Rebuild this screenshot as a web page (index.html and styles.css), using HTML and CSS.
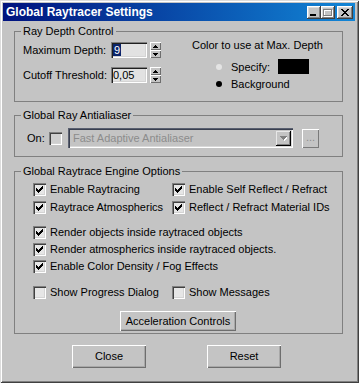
FILE: index.html
```html
<!DOCTYPE html>
<html>
<head>
<meta charset="utf-8">
<link rel="stylesheet" href="styles.css">
</head>
<body>
<div class="window">
  <div class="titlebar">
    <span class="title">Global Raytracer Settings</span>
    <div class="tbtns">
      <span class="tbtn tmin"><svg width="6" height="2" viewBox="0 0 6 2"><rect width="6" height="2" fill="#000"/></svg></span>
      <span class="tbtn tmax"><svg width="10" height="9" viewBox="0 0 10 9" shape-rendering="crispEdges"><path d="M1.5 2.5h8v6h-8z" fill="none" stroke="#fff"/><path d="M0.5 1.5h8v6h-8z" fill="none" stroke="#808080"/><rect x="0" y="1" width="9" height="1" fill="#808080"/></svg></span>
      <span class="tbtn tclose"><svg width="8" height="7" viewBox="0 0 8 7" shape-rendering="crispEdges"><path d="M0 0h2v1H0zM1 1h2v1H1zM2 2h4v1H2zM3 3h2v1H3zM2 4h4v1H2zM1 5h2v1H1zM0 6h2v1H0zM6 0h2v1H6zM5 1h2v1H5zM5 5h2v1H5zM6 6h2v1H6z" fill="#000"/></svg></span>
    </div>
  </div>
  <div class="client">
    <fieldset class="group g1">
      <legend>Ray Depth Control</legend>
      <div class="g1-body">
        <div class="depth">
          <div class="frow">
            <label>Maximum Depth:</label>
            <div class="input"><span class="sel">9</span></div>
            <div class="spin">
              <span class="sbtn"><svg width="5" height="3" viewBox="0 0 5 3" shape-rendering="crispEdges"><path d="M2 0h1v1H2zM1 1h3v1H1zM0 2h5v1H0z" fill="#000"/></svg></span>
              <span class="sbtn"><svg width="5" height="3" viewBox="0 0 5 3" shape-rendering="crispEdges"><path d="M0 0h5v1H0zM1 1h3v1H1zM2 2h1v1H2z" fill="#000"/></svg></span>
            </div>
          </div>
          <div class="frow">
            <label>Cutoff Threshold:</label>
            <div class="input">0,05</div>
            <div class="spin">
              <span class="sbtn"><svg width="5" height="3" viewBox="0 0 5 3" shape-rendering="crispEdges"><path d="M2 0h1v1H2zM1 1h3v1H1zM0 2h5v1H0z" fill="#000"/></svg></span>
              <span class="sbtn"><svg width="5" height="3" viewBox="0 0 5 3" shape-rendering="crispEdges"><path d="M0 0h5v1H0zM1 1h3v1H1zM2 2h1v1H2z" fill="#000"/></svg></span>
            </div>
          </div>
        </div>
        <div class="colorcol">
          <div class="ctitle">Color to use at Max. Depth</div>
          <div class="radio r1"><span class="dot off"></span>Specify:<span class="swatch"></span></div>
          <div class="radio r2"><span class="dot on"></span>Background</div>
        </div>
      </div>
    </fieldset>

    <fieldset class="group g2">
      <legend>Global Ray Antialiaser</legend>
      <div class="g2-row">
        <span class="onlbl">On:</span>
        <span class="cb cb-dis"></span>
        <div class="dropdown">
          <span class="ddtext">Fast Adaptive Antialiaser</span>
          <span class="ddbtn"><svg width="7" height="5" viewBox="0 0 7 5" shape-rendering="crispEdges"><path d="M1 1h7v1H1zM2 2h5v1H2zM3 3h3v1H3zM4 4h1v1H4z" fill="#fff"/><path d="M0 0h7v1H0zM1 1h5v1H1zM2 2h3v1H2zM3 3h1v1H3z" fill="#808080"/></svg></span>
        </div>
        <span class="dotsbtn">...</span>
      </div>
    </fieldset>

    <fieldset class="group g3">
      <legend>Global Raytrace Engine Options</legend>
      <div class="grid2">
        <div class="chk"><span class="cb"><svg width="13" height="13" viewBox="0 0 13 13" shape-rendering="crispEdges"><path d="M3 5h1v3H3zM4 6h1v3H4zM5 7h1v3H5zM6 6h1v3H6zM7 5h1v3H7zM8 4h1v3H8zM9 3h1v3H9z" fill="#000"/></svg></span>Enable Raytracing</div>
        <div class="chk"><span class="cb"><svg width="13" height="13" viewBox="0 0 13 13" shape-rendering="crispEdges"><path d="M3 5h1v3H3zM4 6h1v3H4zM5 7h1v3H5zM6 6h1v3H6zM7 5h1v3H7zM8 4h1v3H8zM9 3h1v3H9z" fill="#000"/></svg></span>Enable Self Reflect / Refract</div>
        <div class="chk"><span class="cb"><svg width="13" height="13" viewBox="0 0 13 13" shape-rendering="crispEdges"><path d="M3 5h1v3H3zM4 6h1v3H4zM5 7h1v3H5zM6 6h1v3H6zM7 5h1v3H7zM8 4h1v3H8zM9 3h1v3H9z" fill="#000"/></svg></span>Raytrace Atmospherics</div>
        <div class="chk"><span class="cb"><svg width="13" height="13" viewBox="0 0 13 13" shape-rendering="crispEdges"><path d="M3 5h1v3H3zM4 6h1v3H4zM5 7h1v3H5zM6 6h1v3H6zM7 5h1v3H7zM8 4h1v3H8zM9 3h1v3H9z" fill="#000"/></svg></span>Reflect / Refract Material IDs</div>
      </div>
      <div class="list">
        <div class="chk"><span class="cb"><svg width="13" height="13" viewBox="0 0 13 13" shape-rendering="crispEdges"><path d="M3 5h1v3H3zM4 6h1v3H4zM5 7h1v3H5zM6 6h1v3H6zM7 5h1v3H7zM8 4h1v3H8zM9 3h1v3H9z" fill="#000"/></svg></span>Render objects inside raytraced objects</div>
        <div class="chk"><span class="cb"><svg width="13" height="13" viewBox="0 0 13 13" shape-rendering="crispEdges"><path d="M3 5h1v3H3zM4 6h1v3H4zM5 7h1v3H5zM6 6h1v3H6zM7 5h1v3H7zM8 4h1v3H8zM9 3h1v3H9z" fill="#000"/></svg></span>Render atmospherics inside raytraced objects.</div>
        <div class="chk"><span class="cb"><svg width="13" height="13" viewBox="0 0 13 13" shape-rendering="crispEdges"><path d="M3 5h1v3H3zM4 6h1v3H4zM5 7h1v3H5zM6 6h1v3H6zM7 5h1v3H7zM8 4h1v3H8zM9 3h1v3H9z" fill="#000"/></svg></span>Enable Color Density / Fog Effects</div>
      </div>
      <div class="grid2 last">
        <div class="chk"><span class="cb"></span>Show Progress Dialog</div>
        <div class="chk"><span class="cb"></span>Show Messages</div>
      </div>
      <span class="btn accel">Acceleration Controls</span>
    </fieldset>

    <div class="actions">
      <span class="btn big">Close</span>
      <span class="btn big">Reset</span>
    </div>
  </div>
</div>
</body>
</html>
```

FILE: styles.css
```css
html, body {
  margin: 0;
  padding: 0;
  background: #c4c4c4;
}
body {
  font-family: "Liberation Sans", Arial, sans-serif;
  font-size: 11px;
  color: #000;
}
.window {
  width: 359px;
  height: 383px;
  box-sizing: border-box;
  padding: 3px 4px 4px 3px;
  background: #c4c4c4;
  box-shadow: inset 1px 1px #dcdcdc, inset -1px -1px #404040, inset 2px 2px #ffffff, inset -2px -2px #808080;
  display: flex;
  flex-direction: column;
}
.titlebar {
  height: 18px;
  flex: none;
  background: linear-gradient(90deg, #00127e, #1286d6);
  display: flex;
  align-items: center;
  padding-left: 3px;
  color: #fff;
  font-weight: bold;
  font-size: 12px;
}
.title { flex: 1; }
.tbtns {
  display: flex;
  margin-right: 2px;
}
.tbtn {
  width: 14px;
  height: 13px;
  box-sizing: border-box;
  background: #c4c4c4;
  box-shadow: inset -1px -1px #404040, inset 1px 1px #ffffff, inset -2px -2px #808080, inset 2px 2px #dcdcdc;
  display: flex;
  align-items: center;
  justify-content: center;
}
.tmin { align-items: flex-end; padding: 0 4px 3px 3px; justify-content: flex-start; }
.tmin svg { display: block; }
.tclose { width: 16px; margin-left: 2px; }

.client {
  flex: 1;
  padding: 3px 12px 0 11px;
}
.group {
  margin: 0;
  padding: 0;
  border: 1px solid #808080;
  min-width: 0;
}
.group legend {
  margin-left: 6px;
  padding: 0 2px;
  height: 14px;
  line-height: 14px;
}

/* group 1 */
.g1 { padding-bottom: 10px; }
.g1-body { display: flex; }
.depth {
  flex: none;
  margin-left: 8px;
  margin-top: 4px;
  display: flex;
  flex-direction: column;
  gap: 9px;
}
.frow {
  display: flex;
  align-items: center;
  height: 16px;
}
.frow label {
  flex: none;
  width: 82px;
  text-align: right;
  margin-right: 6px;
  white-space: nowrap;
}
.input {
  flex: none;
  width: 36px;
  height: 16px;
  box-sizing: border-box;
  background: #e2e2e2;
  box-shadow: inset 1px 1px #808080, inset 2px 2px #202020, inset -1px -1px #ffffff, inset -2px -2px #d4d4d4;
  padding: 2px 2px 0 2px;
  line-height: 12px;
}
.sel {
  display: inline-block;
  background: #0a246a;
  color: #fff;
  padding: 0 1px;
}
.spin {
  flex: none;
  margin-left: 3px;
  width: 11px;
  height: 16px;
  display: flex;
  flex-direction: column;
}
.sbtn {
  flex: 1;
  box-shadow: inset 1px 1px #ffffff, inset -1px -1px #6e6e6e;
  display: flex;
  align-items: center;
  justify-content: center;
}
.sbtn svg { display: block; }
.colorcol { margin-left: 31px; white-space: nowrap; }
.ctitle { line-height: 14px; }
.radio {
  display: flex;
  align-items: center;
  margin-left: 24px;
}
.r1 { margin-top: 7px; height: 15px; }
.r2 { margin-top: 3px; height: 14px; }
.dot {
  width: 6px;
  height: 6px;
  border-radius: 50%;
  margin-right: 9px;
}
.dot.off { background: #e4e4e4; }
.dot.on { background: #000; }
.swatch {
  width: 31px;
  height: 15px;
  background: #000;
  margin-left: 8px;
}

/* group 2 */
.g2 {
  margin-top: 6px;
  padding: 6px 0 8px 0;
}
.g2-row {
  display: flex;
  align-items: center;
  height: 20px;
  margin-left: 12px;
}
.onlbl { width: 22px; flex: none; }
.cb {
  width: 13px;
  height: 13px;
  flex: none;
  box-sizing: border-box;
  background: #e6e6e6;
  box-shadow: inset 1px 1px #808080, inset 2px 2px #404040, inset -1px -1px #ffffff, inset -2px -2px #d4d4d4;
  margin-right: 4px;
}
.cb svg { display: block; }
.cb-dis { background: #cfcfcf; margin-right: 0; }
.dropdown {
  flex: none;
  margin-left: 6px;
  width: 225px;
  height: 20px;
  box-sizing: border-box;
  background: #c4c4c4;
  box-shadow: inset 1px 1px #5a6070, inset 2px 2px #3a4050, inset -1px -1px #ffffff, inset -2px -2px #d8d8d8;
  display: flex;
  align-items: center;
  padding: 0 2px 0 5px;
}
.ddtext {
  flex: 1;
  color: #8c8c8c;
}
.ddbtn {
  width: 15px;
  height: 15px;
  box-sizing: border-box;
  background: #c4c4c4;
  box-shadow: inset -1px -1px #000000, inset 1px 1px #e8e8e8, inset -2px -2px #808080;
  display: flex;
  align-items: center;
  justify-content: center;
}
.ddbtn svg { display: block; }
.dotsbtn {
  flex: none;
  margin-left: 9px;
  width: 17px;
  height: 19px;
  box-sizing: border-box;
  box-shadow: inset 1px 1px #ffffff, inset -1px -1px #7a7a7a;
  color: #8c8c8c;
  text-align: center;
  line-height: 17px;
}

/* group 3 */
.g3 {
  margin-top: 7px;
  padding: 5px 0 2px 0;
}
.grid2 {
  display: grid;
  grid-template-columns: 139px auto;
  row-gap: 5px;
  margin-left: 18px;
}
.chk {
  display: flex;
  align-items: center;
  height: 13px;
  line-height: 13px;
  white-space: nowrap;
}
.list {
  margin: 12px 0 0 18px;
  display: flex;
  flex-direction: column;
  gap: 4px;
}
.grid2.last { margin-top: 13px; }
.btn {
  display: block;
  box-sizing: border-box;
  background: #c4c4c4;
  box-shadow: inset 1px 1px #ffffff, inset -1px -1px #6e6e6e, inset -2px -2px #a8a8a8;
  text-align: center;
}
.accel {
  margin: 12px 0 0 105px;
  width: 116px;
  height: 20px;
  line-height: 20px;
}
.actions {
  display: flex;
  margin-top: 11px;
  padding-left: 58px;
  gap: 61px;
}
.big {
  width: 74px;
  height: 23px;
  line-height: 23px;
}
```
